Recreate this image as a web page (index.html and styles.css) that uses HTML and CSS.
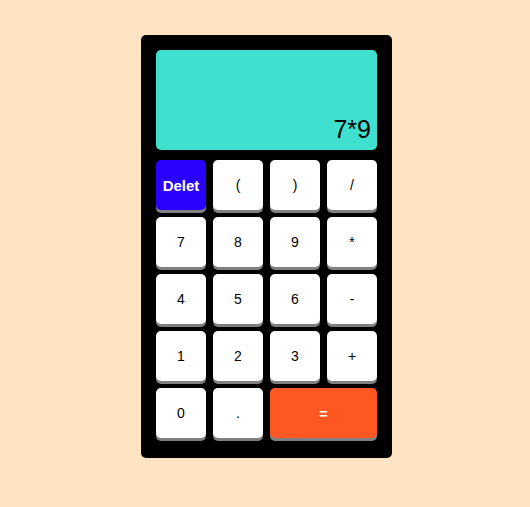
FILE: index.html
```html
<!DOCTYPE html>
<html>
<head>
<meta charset="utf-8">
<link rel="stylesheet" href="styles.css">
</head>
<body>
<div class="calc">
  <div class="display"><span class="value">7*9</span></div>
  <div class="keys">
    <button class="key del">Delet</button>
    <button class="key">(</button>
    <button class="key">)</button>
    <button class="key">/</button>
    <button class="key">7</button>
    <button class="key">8</button>
    <button class="key">9</button>
    <button class="key">*</button>
    <button class="key">4</button>
    <button class="key">5</button>
    <button class="key">6</button>
    <button class="key">-</button>
    <button class="key">1</button>
    <button class="key">2</button>
    <button class="key">3</button>
    <button class="key">+</button>
    <button class="key">0</button>
    <button class="key">.</button>
    <button class="key eq">=</button>
  </div>
</div>
</body>
</html>
```
FILE: styles.css
```css
html, body {
  margin: 0;
  padding: 0;
}
body {
  background: #ffe4c4;
  font-family: "Liberation Sans", Arial, sans-serif;
  width: 530px;
  height: 507px;
  display: flex;
  justify-content: center;
  align-items: flex-start;
}
.calc {
  margin-top: 35px;
  margin-left: 3px;
  background: #000;
  border-radius: 5px;
  padding: 15px 15px 20px 15px;
  width: 221px;
}
.display {
  height: 100px;
  background: #40e0d0;
  border-radius: 5px;
  display: flex;
  justify-content: flex-end;
  align-items: flex-end;
  padding: 0 6px 6px 0;
  box-sizing: border-box;
}
.value {
  font-size: 25px;
  color: #000;
  line-height: 29px;
}
.keys {
  margin-top: 10px;
  display: grid;
  grid-template-columns: repeat(4, 50px);
  grid-auto-rows: 50px;
  gap: 7px;
}
.key {
  border: none;
  border-radius: 5px;
  background: #fff;
  box-shadow: 0 3px 0 #808080;
  font-family: "Liberation Sans", Arial, sans-serif;
  font-size: 14px;
  color: #000;
  padding: 0;
  margin: 0;
}
.del {
  background: #2a00ff;
  color: #fff;
  font-weight: bold;
  font-size: 15px;
}
.eq {
  grid-column: span 2;
  background: #ff5722;
  color: #fff;
  font-weight: bold;
  font-size: 15px;
}
```
